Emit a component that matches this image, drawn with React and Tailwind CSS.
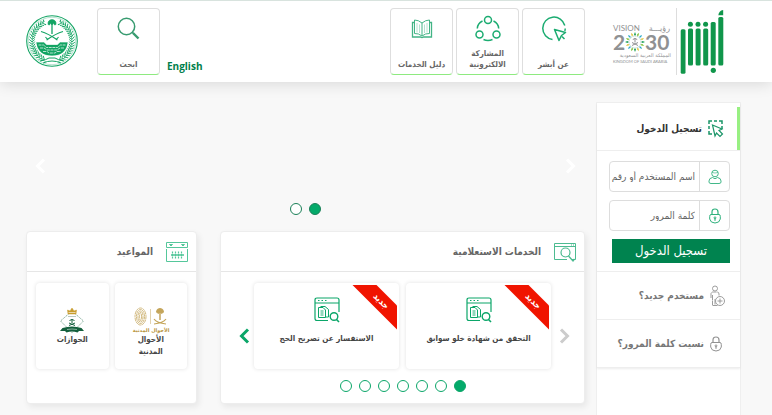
import { useState } from "react";

/* ========================= */
/* DATA */
/* ========================= */

const NAV = [
    { label: "عن أبشر", Icon: CursorIcon },
    { label: "المشاركة الالكترونية", Icon: ShareIcon },
    { label: "دليل الخدمات", Icon: BookIcon }
];

const SERVICES = ["التحقق من شهادة خلو سوابق", "الاستفسار عن تصريح الحج"];

/* ========================= */
/* LOGOS */
/* ========================= */

function AbsherLogo() {
    return (
        <svg width="44" height="66" viewBox="0 0 44 66" fill="#10964b" role="img" aria-label="أبشر">
            <rect x=".7" y="21.3" width="4.8" height="44.400" rx="1.500" />
            <rect x="8" y="20.500" width="5" height="37" rx="1.500" />
            <rect x="15.600" y="20.500" width="5" height="37" rx="1.500" />
            <rect x="23.200" y="20.500" width="5" height="37" rx="1.500" />
            <rect x="30.700" y="14" width="5" height="43.500" rx="1.500" />
            <rect x="38.300" y="9" width="5" height="48.500" rx="1.500" />
            <circle cx="10.400" cy="16.300" r="2.500" />
            <circle cx="18" cy="16.300" r="2.500" />
            <circle cx="25.600" cy="16.300" r="2.500" />
            <circle cx="33.300" cy="62.300" r="2.600" />
            <path d="M38.300 7.200q.5-4.500 4.900-5.200v5.200z" />
        </svg>
    );
}

function VisionLogo() {
    const rays = Array.from({ length: 16 }, (_, i) => i * 22.5);
    const colors = ["#1ba05a", "#8ac53f", "#29a9c9", "#e0c94a"];

    return (
        <svg width="60" height="42" viewBox="0 0 60 42" fill="#8f9193" fontFamily="Lato, 'DejaVu Sans', sans-serif">
            <text x="1" y="7" fontSize="8" direction="ltr">VISION</text>
            <text x="58" y="7" fontSize="8" direction="rtl" fontFamily="'DejaVu Sans', sans-serif">رؤيـــة</text>
            <text x="1" y="26" fontSize="21" fontWeight="700" direction="ltr">2</text>
            <text x="33" y="26" fontSize="21" fontWeight="700" direction="ltr">30</text>
            <g transform="translate(23 18)">
                {rays.map((a, i) => (
                    <path key={a} transform={`rotate(${a})`} d="M0-6l1-1.600L0-10l-1 2.400z" fill={colors[i % 4]} />
                ))}
                <circle r="6" fill="none" stroke="#a8c8bd" strokeWidth=".8" strokeDasharray="1.500 .6" />
                <path d="M0-4v4.500M-2.200-2.500q2.200-2 4.400 0M-3 3.500L3 .5M3 3.500L-3 .5" fill="none" stroke="#8f9193" />
            </g>
            <text x="59" y="33" fontSize="5" direction="rtl" fontFamily="'DejaVu Sans', sans-serif">المملكة العربية السعودية</text>
            <text x="1" y="39" fontSize="4" direction="ltr">KINGDOM OF SAUDI ARABIA</text>
        </svg>
    );
}

function Emblem() {
    const leaves = Array.from({ length: 19 }, (_, i) => 25 + i * 7.2);

    return (
        <svg width="52" height="54" viewBox="0 0 52 54" fill="none" stroke="#12a463" role="img" aria-label="وزارة الداخلية">
            <circle cx="26" cy="27" r="25.300" strokeWidth="1.100" />
            <circle cx="26" cy="27" r="23.700" strokeWidth=".3" />
            {[1, -1].map((side) => (
                <g key={side} transform={`translate(26 27) scale(${side} 1)`}>
                    <path d="M7-20Q20-14 20 0 19 15 6 21" strokeWidth=".5" />
                    {leaves.map((a) => (
                        <g key={a} transform={`rotate(${a}) translate(0 -20)`}>
                            <path d="M-1.500-2.800L1 0l-2.500 2.800" strokeWidth=".9" />
                        </g>
                    ))}
                </g>
            ))}
            <path d="M26 8v12" strokeWidth="1.300" />
            <path d="M22 10.500q-.5-4.500 4-5 4.500.5 4 5l-1.500.5-1-1.800-1.500 1.800-1.500-1.800-1 1.800z" fill="#12a463" strokeWidth=".6" />
            <path d="M15 17.500q7 2 16.500 8.500M37 17.500q-7 2-16.500 8.500M19.500 23l2.500 3M32.500 23L30 26" strokeWidth="1.100" />
            <path d="M10.500 28.500h7.500l2.500 2.500h11l2.500-2.500h7.500Q40 41.500 26 41.500T10.500 28.500z" fill="#12a463" strokeWidth=".3" />
            <path d="M12.500 31h5l3 2.500h11l3-2.500h5M14 34h4l3 2h10l3-2h4M17 37.500h4l2 1.500h6l2-1.500h4" stroke="#fff" strokeWidth=".7" strokeDasharray="3 .7" />
            <path d="M14 47q6-1 9-3h6q3 2 9 3M17 49q9-4 18 0" strokeWidth="1" />
        </svg>
    );
}

function CivilLogo() {
    return (
        <svg width="34" height="27" viewBox="0 0 34 27" fill="none" stroke="#c4a55a" className="overflow-visible">
            {[1, 2.5, 4, 5.5].map((r) => (
                <ellipse key={r} cx="6.500" cy="9.500" rx={r} ry={r + 3} strokeWidth=".8" strokeDasharray="3 .5" />
            ))}
            <path d="M16.500 2v15" strokeWidth=".5" />
            <path d="M26 4v9" strokeWidth="1.500" />
            <path d="M22.500 5q0-3.500 3.500-3.500T29.500 5L28 6.500 26 5l-2 1.500z" fill="#c4a55a" />
            <path d="M20 12q3 4 12 5M32 12q-3 4-12 5" strokeWidth="1.200" />
            <text x="17" y="25" textAnchor="middle" fontSize="5" direction="rtl" fill="#b8923a" stroke="none" fontFamily="'DejaVu Sans', sans-serif">الأحوال المدنية</text>
        </svg>
    );
}

function PassportsLogo() {
    return (
        <svg width="26" height="27" viewBox="0 0 26 27" fill="none">
            <path d="M13 4L1.500 14 13 25.500 24.500 14z" stroke="#6e9f89" strokeWidth=".8" strokeDasharray="1.500 .7" />
            <path d="M9 7L8.500 3l2.500 1 2-3 2 3 2.500-1L17 7z" fill="#c89d2e" stroke="#c89d2e" strokeWidth=".5" />
            <path d="M9.500 5.500h7" stroke="#fff" strokeWidth=".6" />
            <path d="M9 9.500h8" stroke="#bac9c1" />
            <path d="M13 12v4M10.500 13.500q2.500-2 5 0M10 18.500l6-2.500M16 18.500L10 16" stroke="#14603d" />
            <path d="M3.500 21q9.500-3 19 0l2.500 3H20l-1.500 1.500q-5.500-2-11 0L6 24H1z" fill="#14603d" />
            <path d="M8 22.500q5-1 10 0" stroke="#b7d1c4" strokeWidth=".7" />
        </svg>
    );
}

/* ========================= */
/* ICONS */
/* ========================= */

function CursorIcon() {
    return (
        <svg width="26" height="27" viewBox="0 0 26 27" fill="none" stroke="#1bac71" strokeWidth="1.500">
            <path d="M23.800 10.500A11.200 11.200 0 1 0 11.500 24.400" />
            <path d="M24.200 13.500q0 1.500-.4 2.500" />
            <path d="M13.500 14.500l11 3-4 3-2.500 5z" strokeLinejoin="round" />
            <path d="M21 21.500l2.500 2.500" />
        </svg>
    );
}

function ShareIcon() {
    return (
        <svg width="26" height="27" viewBox="0 0 26 27" fill="none" stroke="#1bac71" strokeWidth="1.500">
            <circle cx="13" cy="5" r="3.500" />
            <circle cx="4.500" cy="19.500" r="3.500" />
            <circle cx="21.500" cy="19.500" r="3.500" />
            <path d="M7.500 6Q2.500 8.500 2.300 13.500M18.500 6q5 2.500 5.200 7.500M8.500 24.500q4.500 2 9 0" />
        </svg>
    );
}

function BookIcon() {
    return (
        <svg width="22" height="20" viewBox="0 0 22 20" fill="none" stroke="#43b486">
            <path d="M11 4Q7.500 1 3.500 1v13.500q4-.3 7.500 2.500 3.500-2.800 7.500-2.500V1Q14.500 1 11 4zM11 4v13" />
            <path d="M3.500 3.500h-2v14.500h8q1.500 1 3 0h8V3.500h-2" strokeWidth="1.300" />
            <path d="M6 4v9.500M8.500 5.500V14M13.500 5.500V14M16 4v9.500" stroke="#b5e1d0" />
        </svg>
    );
}

function SearchIcon() {
    return (
        <svg width="23" height="23" viewBox="0 0 23 23" fill="none" stroke="#389b70">
            <circle cx="9.500" cy="9.500" r="8.200" strokeWidth="1.500" />
            <path d="M15 15l2 2" strokeWidth="1.500" />
            <path d="M16 16l5.500 5.500" strokeWidth="2.400" />
        </svg>
    );
}

function SelectIcon() {
    return (
        <svg width="16" height="18" viewBox="0 0 16 18" fill="none" stroke="#1a9568" strokeWidth="1.500">
            <path d="M1 4V1h3M6 1h3M11 1h3v3M14 6v3M1 6v3M1 11v3h3" />
            <path d="M4.500 5l9.500 4-3 1.500 3.500 3.500-2.500 2.500-3.500-3.500L7 16z" fill="#fff" strokeWidth="1.200" />
        </svg>
    );
}

function UserIcon() {
    return (
        <svg width="14" height="16" viewBox="0 0 14 16" fill="none" stroke="#42b889">
            <circle cx="7" cy="4.500" r="3.300" />
            <path d="M4 3.500q3 1 6 0" strokeWidth=".7" />
            <path d="M1 13V12q0-3 3.500-3.500Q7 11 9.500 8.500 13 9 13 12v1q0 1.500-2 1.500H3Q1 14.500 1 13z" />
        </svg>
    );
}

function LockIcon({ color = "#2fb17d" }) {
    return (
        <svg width="12" height="16" viewBox="0 0 12 16" fill="none" stroke={color}>
            <path d="M3 6.500V4q0-3 3-3t3 3v2.500" strokeWidth="1.200" />
            <path d="M2 6.500h8q1.300 0 1.300 2V11q-.8 4-5.300 4T.700 11V8.500q0-2 1.300-2z" />
            <circle cx="6" cy="9.800" r=".9" />
            <path d="M6 10.500v2.300" strokeWidth="1.200" />
        </svg>
    );
}

function NewUserIcon() {
    return (
        <svg width="15" height="22" viewBox="0 0 15 22" fill="none" stroke="#929292" strokeWidth=".9">
            <circle cx="5" cy="3.500" r="2.500" />
            <path d="M1 13V9q0-2 2-2h4q2 0 2 2v1.500M2.500 10v10.500h5M5 14v6" strokeDasharray="5 .5" />
            <circle cx="10" cy="16" r="4.500" fill="#fff" />
            <path d="M10 13.500v5M7.500 16h5" />
        </svg>
    );
}

function InquiryIcon() {
    return (
        <svg width="24" height="20" viewBox="0 0 24 20" fill="none" stroke="#4dbb91">
            <path d="M19 17.500h3.500V1.500H1.500v16H14M1.500 4.500h21M18 3h1M20 3h1" />
            <circle cx="12.500" cy="10.500" r="4.500" strokeWidth="1.200" />
            <path d="M15.500 14l4.500 5 1.500-2" strokeWidth="1.300" />
        </svg>
    );
}

function CalendarIcon() {
    return (
        <svg width="24" height="22" viewBox="0 0 24 22" fill="none" stroke="#55c79b">
            <path d="M1.500 8v12.500h21V8M1.500 1.500h21v5h-21z" />
            <path d="M4.500 3.500h3l-1.500 1.500zM16.500 3.500h3l-1.500 1.500z" fill="#55c79b" />
            <path d="M7.500 10.500v7M10.500 10.500v7M13.500 10.500v7M16.500 10.500v7" strokeDasharray="2 .500" strokeWidth="1.200" />
            <path d="M6 14h13" strokeWidth="1.600" />
        </svg>
    );
}

function ServiceIcon() {
    return (
        <svg width="26" height="26" viewBox="0 0 26 26" fill="none" stroke="#0ba669" className="shrink-0">
            <path d="M14 23.500H3q-2 0-2-2V3q0-2 2-2h20q2 0 2 2v12" strokeWidth="1.200" />
            <path d="M1 6h24" strokeWidth="1.200" />
            <path d="M4 3.500h1.500M7.500 3.500H9M11 3.500h1.500" />
            <path d="M6.500 9.500H11l3.500 3v7.500h-3M4.500 10.500h4.500l2.500 2.500v7.500h-7z" />
            <path d="M6.500 14h3M6.500 16h3M6.500 18h3" strokeWidth=".9" />
            <circle cx="20" cy="19.500" r="3.800" strokeWidth="1.400" />
            <path d="M22.500 22.500l2.500 2.500" strokeWidth="1.600" />
        </svg>
    );
}

function Chevron({ left }) {
    return (
        <svg width="12" height="18" viewBox="0 0 12 18" fill="none" stroke="currentColor" strokeWidth="3">
            <path d={left ? "M10 2.500L3.500 9l6.500 6.500" : "M2 2.500L8.500 9 2 15.500"} />
        </svg>
    );
}

/* ========================= */
/* PARTS */
/* ========================= */

function Tile({ label, children }) {
    return (
        <button
            type="button"
            className="flex h-[67px] w-[63px] flex-col items-center justify-between rounded border border-[#dedede] border-b-[#8eea80] bg-white pt-1.5 pb-1 text-[8px] leading-[11px] font-bold text-[#666]"
        >
            <span className="flex h-[27px] items-center">{children}</span>
            <span>{label}</span>
        </button>
    );
}

function Dots({ count, active, onChange, dark }) {
    return (
        <div className="flex justify-center gap-[7px]">
            {Array.from({ length: count }, (_, i) => (
                <button
                    key={i}
                    type="button"
                    aria-label={`${i + 1}`}
                    onClick={() => onChange(i)}
                    className={`size-3 rounded-full border ${dark ? "border-[#1b8058]" : "border-[#0ba669]"} ${i === active ? "bg-[#04aa6a]" : "bg-white"}`}
                />
            ))}
        </div>
    );
}

function Field({ id, type, placeholder, children }) {
    return (
        <div className="flex h-[31px] rounded border border-[#ddd] bg-white">
            <label htmlFor={id} aria-label={placeholder} className="flex w-[30px] shrink-0 items-center justify-center border-l border-[#ddd]">
                {children}
            </label>
            <input
                id={id}
                type={type}
                placeholder={placeholder}
                className="w-full min-w-0 bg-transparent pr-1 text-[10px] text-[#555] outline-none placeholder:text-[#666]"
            />
        </div>
    );
}

function Panel({ title, icon, children }) {
    return (
        <section className="flex h-[173px] min-w-0 flex-col rounded border border-[#ededed] bg-white shadow-[2px_3px_6px_rgba(0,0,0,0.07)]">
            <h2 className="flex h-10 shrink-0 items-center gap-3 border-b border-[#e6e6e6] px-[7px] text-[10px] font-bold text-[#666]">
                {icon}
                {title}
            </h2>
            {children}
        </section>
    );
}

const CARD = "relative flex h-[86px] min-w-0 flex-1 flex-col items-center overflow-hidden rounded border-2 border-white bg-white text-center text-[8px] leading-3 font-bold text-[#444] shadow-[0_0_4px_rgba(0,0,0,0.12)]";

/* ========================= */
/* PAGE */
/* ========================= */

export default function App() {

    const [slide, setSlide] = useState(0);
    const [page, setPage] = useState(0);

    return (
        <div dir="rtl" className="flex min-h-screen flex-col bg-[#f8f8f8] font-['DejaVu_Sans_Condensed','DejaVu_Sans',sans-serif]">

            {/* HEADER */}
            <header className="flex h-[82px] items-start border-t border-[#d8e3de] bg-white pt-[7px] pr-12 pl-[26px] shadow-[0_2px_14px_rgba(0,0,0,0.13)]">
                <div className="flex items-start">
                    <AbsherLogo />
                    <div className="mr-[3px] h-[67px] w-px bg-[#ddd]" />
                    <div className="mt-4 mr-1">
                        <VisionLogo />
                    </div>
                </div>
                <nav className="mr-[27px] flex gap-[3px]">
                    {NAV.map(({ label, Icon }) => (
                        <Tile key={label} label={label}><Icon /></Tile>
                    ))}
                </nav>
                <div className="mr-auto flex">
                    <a href="#en" className="mt-[50px] ml-[7px] font-['Open_Sans',sans-serif] text-[10px] leading-4 font-bold text-[#00804c]">English</a>
                    <Tile label="ابحث"><SearchIcon /></Tile>
                    <div className="mt-1.5 mr-[19px]">
                        <Emblem />
                    </div>
                </div>
            </header>

            <div className="flex grow gap-[11px] pr-[31px] pl-[26px]">

                {/* LOGIN */}
                <aside className="mt-5 w-[145px] shrink-0 border-x border-t border-[#efefef] bg-white">
                    <div className="shadow-[0_1px_2px_rgba(0,0,0,0.08)]">
                        <div className="relative flex h-12 items-center gap-1.5 border-b border-[#eee] pt-1 pr-4 text-[10px] font-bold text-[#333]">
                            <span className="absolute top-1 right-0 bottom-0 w-[3px] bg-[#98f082]" />
                            <SelectIcon />
                            <h2>تسجيل الدخول</h2>
                        </div>
                        <form onSubmit={(e) => e.preventDefault()} className="flex h-[121px] flex-col gap-2 border-b border-[#eee] pt-2.5 pr-2.5 pl-3">
                            <Field id="user" type="text" placeholder="اسم المستخدم أو رقم"><UserIcon /></Field>
                            <Field id="password" type="password" placeholder="كلمة المرور"><LockIcon /></Field>
                            <button type="submit" className="ml-[3px] h-6 bg-[#00834f] text-[13px] leading-6 text-white">تسجيل الدخول</button>
                        </form>
                        <a href="#register" className="flex h-12 items-center gap-1.5 border-b border-[#eee] pr-[15px] text-[10px] font-bold text-[#777]">
                            <NewUserIcon />
                            مستخدم جديد؟
                        </a>
                        <a href="#forgot" className="flex h-12 items-center gap-1.5 border-b border-[#eee] pr-[18px] text-[10px] font-bold text-[#777]">
                            <LockIcon color="#929292" />
                            نسيت كلمة المرور؟
                        </a>
                    </div>
                </aside>

                <main className="min-w-0 flex-1">

                    {/* BANNER */}
                    <div className="flex h-[149px] flex-col justify-end gap-7 pb-4">
                        <div className="flex justify-between px-2 text-white">
                            <button type="button" aria-label="السابق" onClick={() => setSlide(0)}><Chevron /></button>
                            <button type="button" aria-label="التالي" onClick={() => setSlide(1)}><Chevron left /></button>
                        </div>
                        <Dots count={2} active={slide} onChange={setSlide} dark />
                    </div>

                    <div className="grid grid-cols-[365fr_171fr] gap-[23px]">

                        {/* SERVICES */}
                        <Panel title="الخدمات الاستعلامية" icon={<InquiryIcon />}>
                            <div className="flex items-center px-[13px] pt-[11px]">
                                <button type="button" aria-label="السابق" onClick={() => setPage(Math.max(0, page - 1))} className="w-5 shrink-0 pt-5 text-[#ccc]"><Chevron /></button>
                                <div className="flex min-w-0 flex-1 gap-[7px]">
                                    {SERVICES.map((name) => (
                                        <article key={name} className={`${CARD} gap-2.5 pt-3`}>
                                            <ServiceIcon />
                                            <h3>{name}</h3>
                                            <span className="absolute top-2 -right-6 w-20 rotate-45 bg-[#f01400] text-[9px] leading-[17px] text-white">جديد</span>
                                        </article>
                                    ))}
                                </div>
                                <button type="button" aria-label="التالي" onClick={() => setPage(Math.min(6, page + 1))} className="flex w-5 shrink-0 justify-center pt-5 text-[#0ba669]"><Chevron left /></button>
                            </div>
                            <div className="mt-[11px]">
                                <Dots count={7} active={page} onChange={setPage} />
                            </div>
                        </Panel>

                        {/* APPOINTMENTS */}
                        <Panel title="المواعيد" icon={<CalendarIcon />}>
                            <div className="flex gap-1.5 px-[9px] pt-[11px]">
                                <a href="#civil" className={`${CARD} px-3.5 pt-[22px]`}>
                                    <CivilLogo />
                                    الأحوال المدنية
                                </a>
                                <a href="#passports" className={`${CARD} px-3.5 pt-[22px]`}>
                                    <PassportsLogo />
                                    الجوازات
                                </a>
                            </div>
                        </Panel>
                    </div>
                </main>
            </div>
        </div>
    );
}
